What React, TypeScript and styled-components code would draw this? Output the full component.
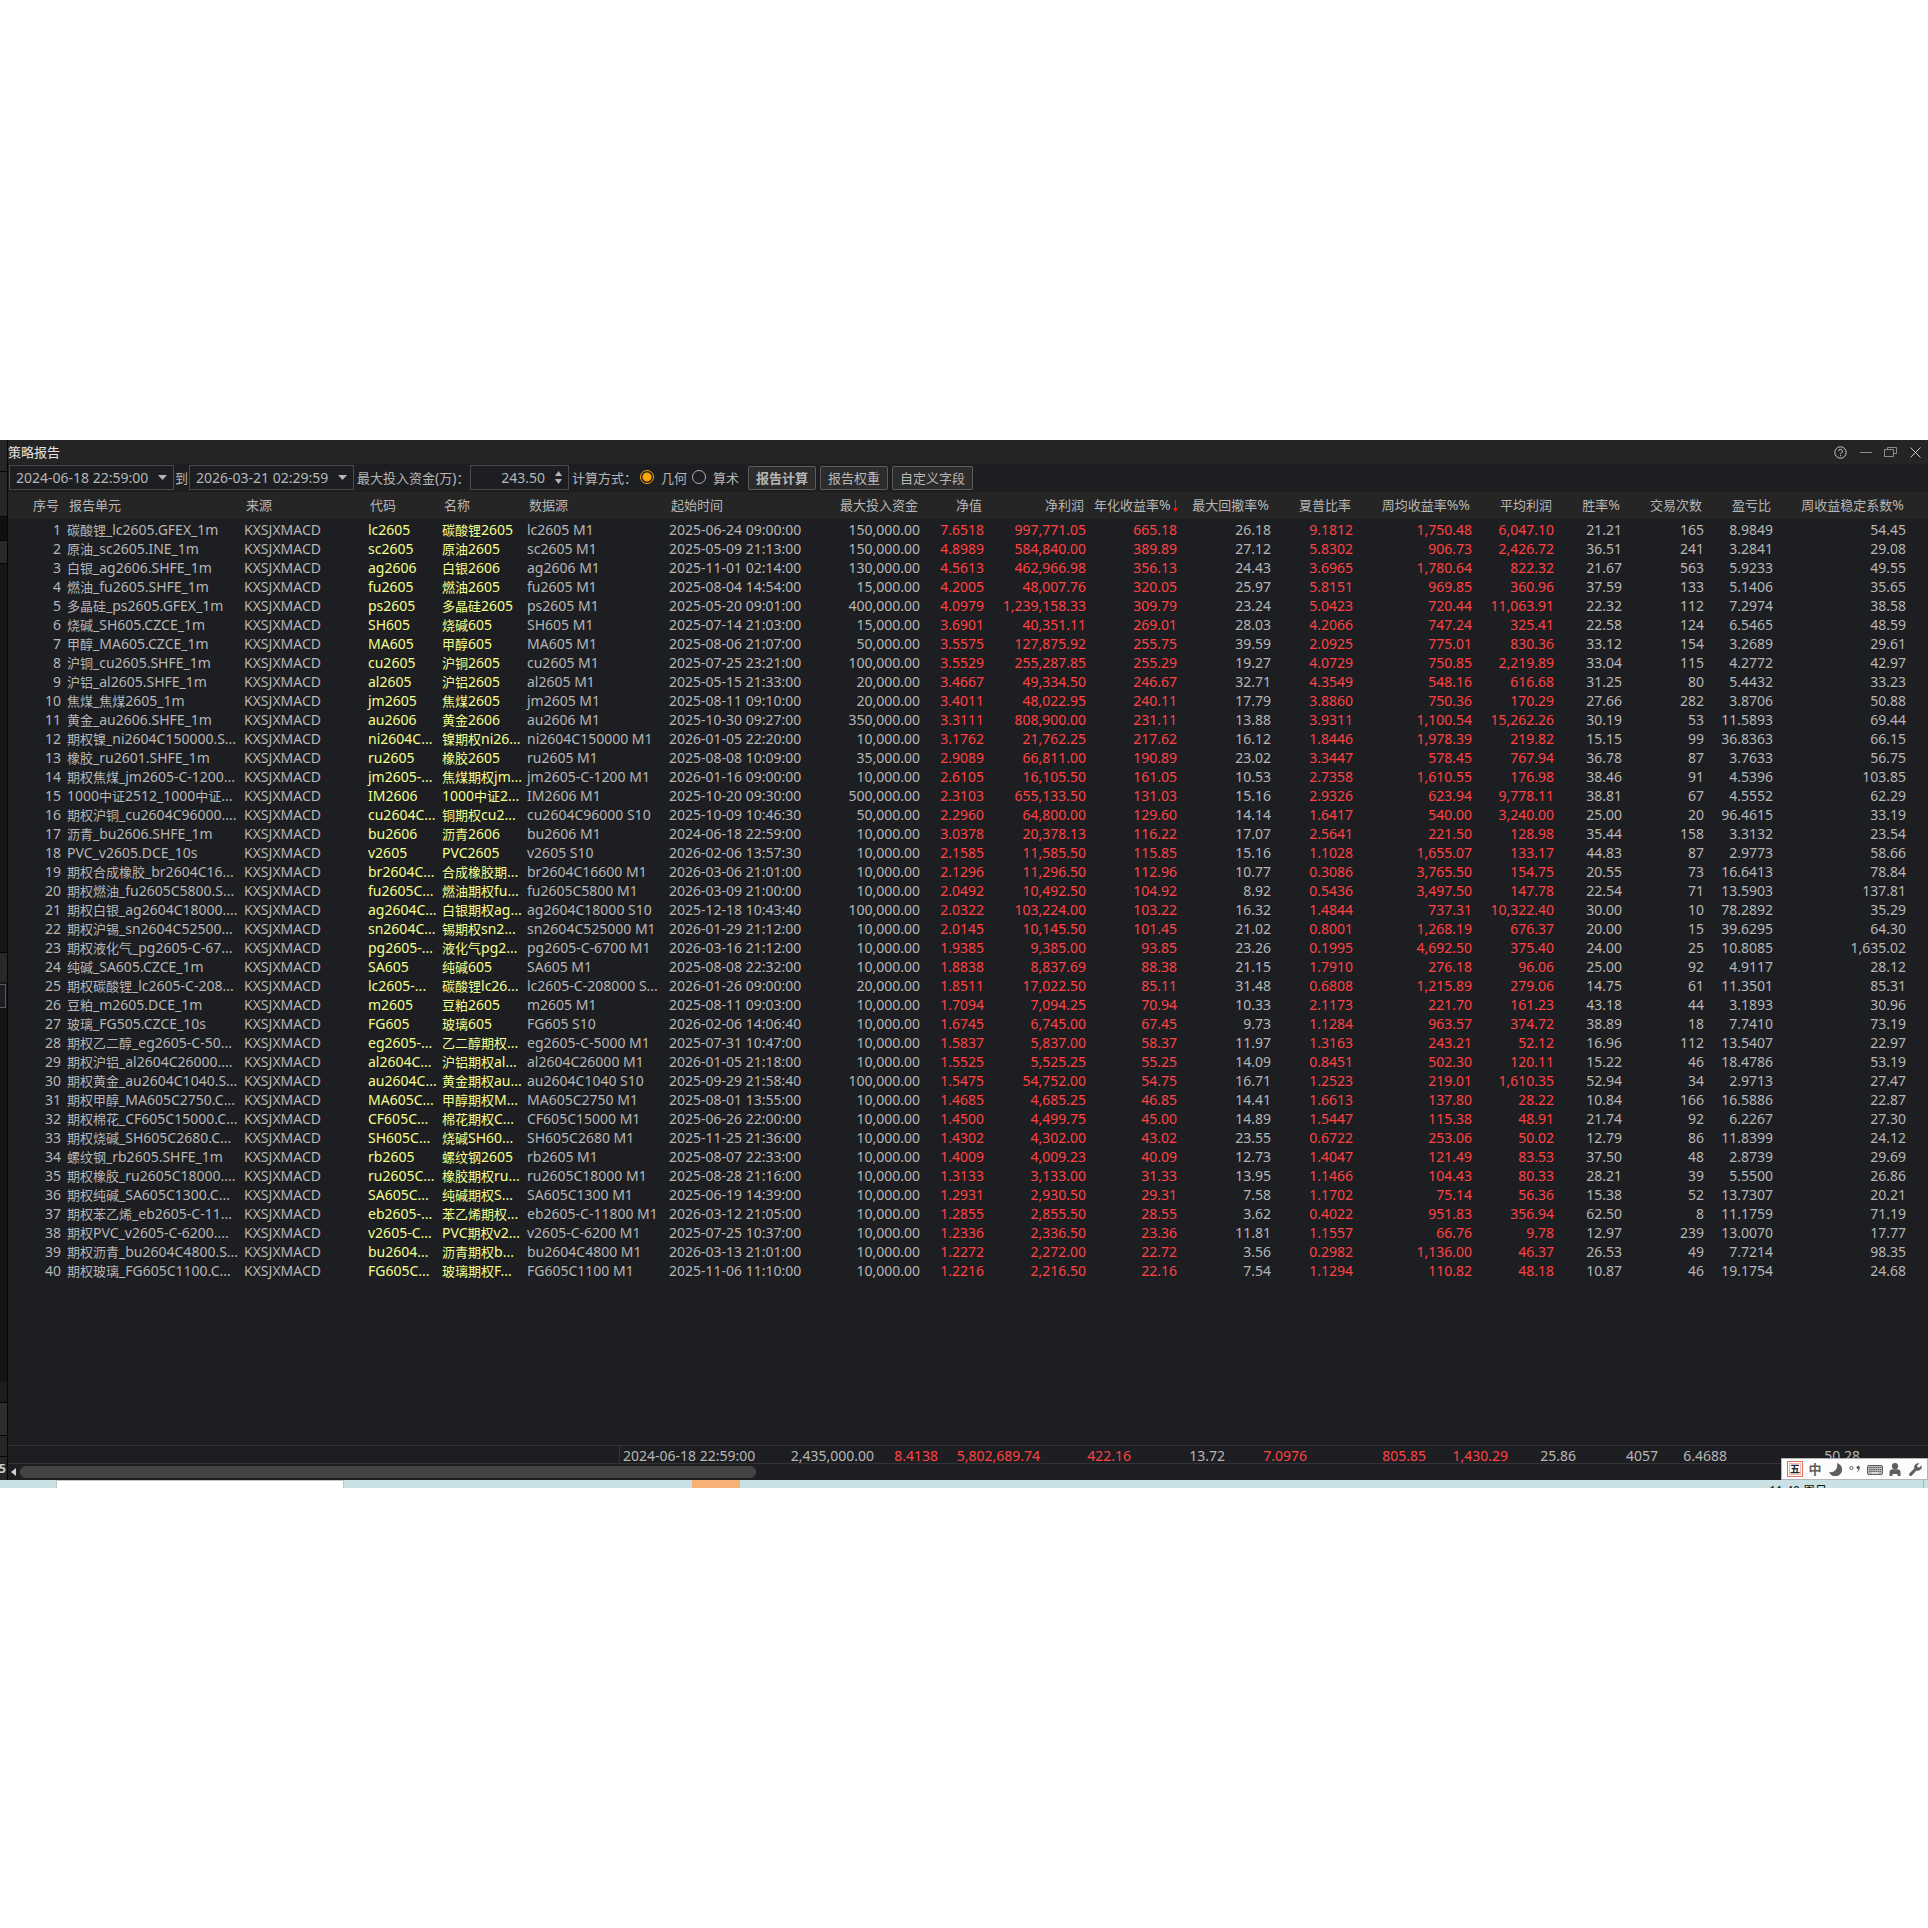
import React, { useState } from "react";
import styled, { createGlobalStyle, css } from "styled-components";

const GlobalStyle = createGlobalStyle`
  * { box-sizing: border-box; }
  body {
    margin: 0;
    background: #fff;
    font-family: "Noto Sans", "Noto Sans CJK SC", sans-serif;
    font-size: 14px;
    color: #b6b6b6;
  }
  button, input, select { font: inherit; color: inherit; margin: 0; }
`;

/* ---------- data ---------- */

type Kind = "text" | "name" | "num" | "gain";

interface Column {
  title: string;
  width: number;
  kind: Kind;
  sorted?: boolean;
}

const columns: Column[] = [
  { title: "序号", width: 56, kind: "num" },
  { title: "报告单元", width: 177, kind: "text" },
  { title: "来源", width: 124, kind: "text" },
  { title: "代码", width: 74, kind: "name" },
  { title: "名称", width: 85, kind: "name" },
  { title: "数据源", width: 142, kind: "text" },
  { title: "起始时间", width: 146, kind: "text" },
  { title: "最大投入资金", width: 111, kind: "num" },
  { title: "净值", width: 64, kind: "gain" },
  { title: "净利润", width: 102, kind: "gain" },
  { title: "年化收益率%", width: 91, kind: "gain", sorted: true },
  { title: "最大回撤率%", width: 94, kind: "num" },
  { title: "夏普比率", width: 82, kind: "gain" },
  { title: "周均收益率%%", width: 119, kind: "gain" },
  { title: "平均利润", width: 82, kind: "gain" },
  { title: "胜率%", width: 68, kind: "num" },
  { title: "交易次数", width: 82, kind: "num" },
  { title: "盈亏比", width: 69, kind: "num" },
  { title: "周收益稳定系数%", width: 133, kind: "num" },
];

const source = "KXSJXMACD";

const rows: string[][] = `
碳酸锂_lc2605.GFEX_1m|lc2605|碳酸锂2605|lc2605 M1|2025-06-24 09:00:00|150,000.00|7.6518|997,771.05|665.18|26.18|9.1812|1,750.48|6,047.10|21.21|165|8.9849|54.45
原油_sc2605.INE_1m|sc2605|原油2605|sc2605 M1|2025-05-09 21:13:00|150,000.00|4.8989|584,840.00|389.89|27.12|5.8302|906.73|2,426.72|36.51|241|3.2841|29.08
白银_ag2606.SHFE_1m|ag2606|白银2606|ag2606 M1|2025-11-01 02:14:00|130,000.00|4.5613|462,966.98|356.13|24.43|3.6965|1,780.64|822.32|21.67|563|5.9233|49.55
燃油_fu2605.SHFE_1m|fu2605|燃油2605|fu2605 M1|2025-08-04 14:54:00|15,000.00|4.2005|48,007.76|320.05|25.97|5.8151|969.85|360.96|37.59|133|5.1406|35.65
多晶硅_ps2605.GFEX_1m|ps2605|多晶硅2605|ps2605 M1|2025-05-20 09:01:00|400,000.00|4.0979|1,239,158.33|309.79|23.24|5.0423|720.44|11,063.91|22.32|112|7.2974|38.58
烧碱_SH605.CZCE_1m|SH605|烧碱605|SH605 M1|2025-07-14 21:03:00|15,000.00|3.6901|40,351.11|269.01|28.03|4.2066|747.24|325.41|22.58|124|6.5465|48.59
甲醇_MA605.CZCE_1m|MA605|甲醇605|MA605 M1|2025-08-06 21:07:00|50,000.00|3.5575|127,875.92|255.75|39.59|2.0925|775.01|830.36|33.12|154|3.2689|29.61
沪铜_cu2605.SHFE_1m|cu2605|沪铜2605|cu2605 M1|2025-07-25 23:21:00|100,000.00|3.5529|255,287.85|255.29|19.27|4.0729|750.85|2,219.89|33.04|115|4.2772|42.97
沪铝_al2605.SHFE_1m|al2605|沪铝2605|al2605 M1|2025-05-15 21:33:00|20,000.00|3.4667|49,334.50|246.67|32.71|4.3549|548.16|616.68|31.25|80|5.4432|33.23
焦煤_焦煤2605_1m|jm2605|焦煤2605|jm2605 M1|2025-08-11 09:10:00|20,000.00|3.4011|48,022.95|240.11|17.79|3.8860|750.36|170.29|27.66|282|3.8706|50.88
黄金_au2606.SHFE_1m|au2606|黄金2606|au2606 M1|2025-10-30 09:27:00|350,000.00|3.3111|808,900.00|231.11|13.88|3.9311|1,100.54|15,262.26|30.19|53|11.5893|69.44
期权镍_ni2604C150000.S...|ni2604C...|镍期权ni26...|ni2604C150000 M1|2026-01-05 22:20:00|10,000.00|3.1762|21,762.25|217.62|16.12|1.8446|1,978.39|219.82|15.15|99|36.8363|66.15
橡胶_ru2601.SHFE_1m|ru2605|橡胶2605|ru2605 M1|2025-08-08 10:09:00|35,000.00|2.9089|66,811.00|190.89|23.02|3.3447|578.45|767.94|36.78|87|3.7633|56.75
期权焦煤_jm2605-C-1200...|jm2605-...|焦煤期权jm...|jm2605-C-1200 M1|2026-01-16 09:00:00|10,000.00|2.6105|16,105.50|161.05|10.53|2.7358|1,610.55|176.98|38.46|91|4.5396|103.85
1000中证2512_1000中证...|IM2606|1000中证2...|IM2606 M1|2025-10-20 09:30:00|500,000.00|2.3103|655,133.50|131.03|15.16|2.9326|623.94|9,778.11|38.81|67|4.5552|62.29
期权沪铜_cu2604C96000....|cu2604C...|铜期权cu2...|cu2604C96000 S10|2025-10-09 10:46:30|50,000.00|2.2960|64,800.00|129.60|14.14|1.6417|540.00|3,240.00|25.00|20|96.4615|33.19
沥青_bu2606.SHFE_1m|bu2606|沥青2606|bu2606 M1|2024-06-18 22:59:00|10,000.00|3.0378|20,378.13|116.22|17.07|2.5641|221.50|128.98|35.44|158|3.3132|23.54
PVC_v2605.DCE_10s|v2605|PVC2605|v2605 S10|2026-02-06 13:57:30|10,000.00|2.1585|11,585.50|115.85|15.16|1.1028|1,655.07|133.17|44.83|87|2.9773|58.66
期权合成橡胶_br2604C16...|br2604C...|合成橡胶期...|br2604C16600 M1|2026-03-06 21:01:00|10,000.00|2.1296|11,296.50|112.96|10.77|0.3086|3,765.50|154.75|20.55|73|16.6413|78.84
期权燃油_fu2605C5800.S...|fu2605C...|燃油期权fu...|fu2605C5800 M1|2026-03-09 21:00:00|10,000.00|2.0492|10,492.50|104.92|8.92|0.5436|3,497.50|147.78|22.54|71|13.5903|137.81
期权白银_ag2604C18000....|ag2604C...|白银期权ag...|ag2604C18000 S10|2025-12-18 10:43:40|100,000.00|2.0322|103,224.00|103.22|16.32|1.4844|737.31|10,322.40|30.00|10|78.2892|35.29
期权沪锡_sn2604C52500...|sn2604C...|锡期权sn2...|sn2604C525000 M1|2026-01-29 21:12:00|10,000.00|2.0145|10,145.50|101.45|21.02|0.8001|1,268.19|676.37|20.00|15|39.6295|64.30
期权液化气_pg2605-C-67...|pg2605-...|液化气pg2...|pg2605-C-6700 M1|2026-03-16 21:12:00|10,000.00|1.9385|9,385.00|93.85|23.26|0.1995|4,692.50|375.40|24.00|25|10.8085|1,635.02
纯碱_SA605.CZCE_1m|SA605|纯碱605|SA605 M1|2025-08-08 22:32:00|10,000.00|1.8838|8,837.69|88.38|21.15|1.7910|276.18|96.06|25.00|92|4.9117|28.12
期权碳酸锂_lc2605-C-208...|lc2605-...|碳酸锂lc26...|lc2605-C-208000 S...|2026-01-26 09:00:00|20,000.00|1.8511|17,022.50|85.11|31.48|0.6808|1,215.89|279.06|14.75|61|11.3501|85.31
豆粕_m2605.DCE_1m|m2605|豆粕2605|m2605 M1|2025-08-11 09:03:00|10,000.00|1.7094|7,094.25|70.94|10.33|2.1173|221.70|161.23|43.18|44|3.1893|30.96
玻璃_FG505.CZCE_10s|FG605|玻璃605|FG605 S10|2026-02-06 14:06:40|10,000.00|1.6745|6,745.00|67.45|9.73|1.1284|963.57|374.72|38.89|18|7.7410|73.19
期权乙二醇_eg2605-C-50...|eg2605-...|乙二醇期权...|eg2605-C-5000 M1|2025-07-31 10:47:00|10,000.00|1.5837|5,837.00|58.37|11.97|1.3163|243.21|52.12|16.96|112|13.5407|22.97
期权沪铝_al2604C26000....|al2604C...|沪铝期权al...|al2604C26000 M1|2026-01-05 21:18:00|10,000.00|1.5525|5,525.25|55.25|14.09|0.8451|502.30|120.11|15.22|46|18.4786|53.19
期权黄金_au2604C1040.S...|au2604C...|黄金期权au...|au2604C1040 S10|2025-09-29 21:58:40|100,000.00|1.5475|54,752.00|54.75|16.71|1.2523|219.01|1,610.35|52.94|34|2.9713|27.47
期权甲醇_MA605C2750.C...|MA605C...|甲醇期权M...|MA605C2750 M1|2025-08-01 13:55:00|10,000.00|1.4685|4,685.25|46.85|14.41|1.6613|137.80|28.22|10.84|166|16.5886|22.87
期权棉花_CF605C15000.C...|CF605C...|棉花期权C...|CF605C15000 M1|2025-06-26 22:00:00|10,000.00|1.4500|4,499.75|45.00|14.89|1.5447|115.38|48.91|21.74|92|6.2267|27.30
期权烧碱_SH605C2680.C...|SH605C...|烧碱SH60...|SH605C2680 M1|2025-11-25 21:36:00|10,000.00|1.4302|4,302.00|43.02|23.55|0.6722|253.06|50.02|12.79|86|11.8399|24.12
螺纹钢_rb2605.SHFE_1m|rb2605|螺纹钢2605|rb2605 M1|2025-08-07 22:33:00|10,000.00|1.4009|4,009.23|40.09|12.73|1.4047|121.49|83.53|37.50|48|2.8739|29.69
期权橡胶_ru2605C18000....|ru2605C...|橡胶期权ru...|ru2605C18000 M1|2025-08-28 21:16:00|10,000.00|1.3133|3,133.00|31.33|13.95|1.1466|104.43|80.33|28.21|39|5.5500|26.86
期权纯碱_SA605C1300.C...|SA605C...|纯碱期权S...|SA605C1300 M1|2025-06-19 14:39:00|10,000.00|1.2931|2,930.50|29.31|7.58|1.1702|75.14|56.36|15.38|52|13.7307|20.21
期权苯乙烯_eb2605-C-11...|eb2605-...|苯乙烯期权...|eb2605-C-11800 M1|2026-03-12 21:05:00|10,000.00|1.2855|2,855.50|28.55|3.62|0.4022|951.83|356.94|62.50|8|11.1759|71.19
期权PVC_v2605-C-6200....|v2605-C...|PVC期权v2...|v2605-C-6200 M1|2025-07-25 10:37:00|10,000.00|1.2336|2,336.50|23.36|11.81|1.1557|66.76|9.78|12.97|239|13.0070|17.77
期权沥青_bu2604C4800.S...|bu2604...|沥青期权b...|bu2604C4800 M1|2026-03-13 21:01:00|10,000.00|1.2272|2,272.00|22.72|3.56|0.2982|1,136.00|46.37|26.53|49|7.7214|98.35
期权玻璃_FG605C1100.C...|FG605C...|玻璃期权F...|FG605C1100 M1|2025-11-06 11:10:00|10,000.00|1.2216|2,216.50|22.16|7.54|1.1294|110.82|48.18|10.87|46|19.1754|24.68
`
  .trim()
  .split("\n")
  .map((line, i) => {
    const [unit, ...rest] = line.split("|");
    return [String(i + 1), unit, source, ...rest];
  });

const totals = [
  "2024-06-18 22:59:00", "2,435,000.00", "8.4138", "5,802,689.74", "422.16", "13.72",
  "7.0976", "805.85", "1,430.29", "25.86", "4057", "6.4688", "50.28",
];

/* ---------- mixed script text ---------- */

const Han = styled.span`
  font-family: "Noto Sans CJK SC", sans-serif;
  font-size: 13px;
  line-height: 1;
`;

function Mixed({ text }: { text: string }) {
  const parts = text.split(/([\u3400-\u9fff\uff1a]+)/).filter(Boolean);
  return (
    <>
      {parts.map((part, i) =>
        /[\u3400-\u9fff\uff1a]/.test(part) ? <Han key={i}>{part}</Han> : part
      )}
    </>
  );
}

/* ---------- layout ---------- */

const Page = styled.div`
  padding-top: 440px;
`;

const Desktop = styled.div`
  position: relative;
  display: flex;
  background: #161616;
`;

const Strip = styled.div`
  flex: 0 0 8px;
  display: flex;
  flex-direction: column;
  border-right: 1px solid #050505;
  overflow: hidden;
`;

const Segment = styled.div<{ $h?: number; $bg: string; $line?: boolean }>`
  flex: ${(p) => (p.$h ? `0 0 ${p.$h}px` : "1 1 0")};
  background: ${(p) => p.$bg};
  ${(p) => p.$line && css`border-bottom: 1px solid #050505;`}
`;

const StripBox = styled.div`
  flex: 0 0 24px;
  width: 6px;
  border: 1px solid #5a5a5a;
  border-left: 0;
  background: #1d1e22;
`;

const StripDigit = styled.div`
  flex: 0 0 23px;
  display: flex;
  justify-content: flex-end;
  padding-right: 1px;
  background: #262626;
  font-weight: 700;
  font-size: 13px;
  line-height: 22px;
  color: #c8c8c8;
`;

const Panel = styled.main`
  flex: 1;
  min-width: 0;
  background: #1d1e22;
`;

const TitleBar = styled.header`
  display: flex;
  align-items: center;
  justify-content: space-between;
  height: 24px;
  background: #242424;
`;

const Title = styled.h1`
  margin: 0;
  font-size: 13px;
  font-weight: 400;
  line-height: 24px;
  color: #e4e4e4;
`;

const WindowButtons = styled.div`
  display: flex;
`;

const WindowButton = styled.button`
  display: grid;
  place-items: center;
  width: 25px;
  height: 24px;
  padding: 0;
  border: 0;
  background: none;
  color: #a8a8a8;
`;

const Toolbar = styled.form`
  display: flex;
  align-items: center;
  height: 28px;
  padding: 0 1px 2px;
`;

const Picker = styled.span`
  position: relative;
  flex: 0 0 165px;
  height: 25px;
  svg {
    position: absolute;
    right: 7px;
    top: 10px;
    pointer-events: none;
  }
`;

const PickerSelect = styled.select`
  appearance: none;
  width: 100%;
  height: 25px;
  padding: 0 20px 0 6px;
  border: 1px solid #4a4a4d;
  border-radius: 0;
  background: #1d1e22;
`;

const Caption = styled.label<{ $w: number }>`
  flex: 0 0 ${(p) => p.$w}px;
  padding-left: 3px;
  line-height: 25px;
  white-space: nowrap;
`;

const To = styled.span`
  flex: 0 0 15px;
  text-align: center;
  line-height: 25px;
`;

const Spin = styled.span`
  display: flex;
  flex: 0 0 99px;
  min-width: 0;
  height: 25px;
  border: 1px solid #4a4a4d;
`;

const SpinInput = styled.input`
  flex: 1 1 0;
  width: 0;
  min-width: 0;
  padding: 0 10px 0 0;
  border: 0;
  background: none;
  text-align: right;
`;

const SpinArrows = styled.span`
  display: flex;
  flex-direction: column;
  justify-content: center;
  gap: 3px;
  width: 13px;
`;

const SpinButton = styled.button`
  display: block;
  height: 5px;
  padding: 0;
  border: 0;
  background: none;
  line-height: 0;
  text-align: left;
`;

const Choice = styled.label`
  display: flex;
  align-items: center;
  gap: 7px;
  margin-right: 5px;
  line-height: 25px;
`;

const Radio = styled.input`
  appearance: none;
  width: 14px;
  height: 14px;
  border: 1px solid #b0b0b0;
  border-radius: 50%;
  &:checked {
    border-color: #ffa600;
    background: radial-gradient(circle, #ffa600 0 4px, transparent 5px);
  }
`;

const Action = styled.button<{ $strong?: boolean }>`
  height: 24px;
  margin: 1px 0 0 4px;
  padding: 0 7px;
  border: 1px solid #5c5c5c;
  border-radius: 2px;
  background: #2c2c2c;
  font-weight: ${(p) => (p.$strong ? 700 : 400)};
  line-height: 22px;
`;

/* ---------- grid ---------- */

const Viewport = styled.div`
  min-height: 953px;
`;

const Grid = styled.table`
  width: 100%;
  table-layout: fixed;
  border-collapse: separate;
  border-spacing: 0;
`;

const isRight = (k: Kind) => k === "num" || k === "gain";

const Th = styled.th<{ $kind: Kind; $sorted?: boolean }>`
  height: 27px;
  padding: 0 ${(p) => (p.$sorted ? 3 : 5)}px 0 5px;
  background: #252525;
  font-weight: 400;
  line-height: 25px;
  vertical-align: top;
  white-space: nowrap;
  text-align: ${(p) => (isRight(p.$kind) ? "right" : "left")};
`;

const Gap = styled.td`
  height: 1px;
  padding: 0;
`;

const Td = styled.td<{ $kind: Kind }>`
  height: 19px;
  padding: 0 3px;
  overflow: hidden;
  line-height: 19px;
  white-space: nowrap;
  text-align: ${(p) => (isRight(p.$kind) ? "right" : "left")};
  color: ${(p) => (p.$kind === "name" ? "#f4ff8c" : p.$kind === "gain" ? "#ff4242" : "#b6b6b6")};
`;

const Totals = styled.div`
  height: 19px;
  border: solid #343438;
  border-width: 1px 0;
  overflow: hidden;
`;

const Lead = styled.td`
  padding: 0;
  border-right: 1px solid #343438;
`;

const ScrollBar = styled.div`
  display: flex;
  align-items: center;
  gap: 4px;
  height: 16px;
  padding-left: 3px;
`;

const ScrollStep = styled.button`
  width: 5px;
  height: 8px;
  padding: 0;
  border: 0;
  background: none;
  line-height: 0;
`;

const Track = styled.div`
  flex: 1;
`;

const Thumb = styled.div`
  width: 38.6%;
  height: 12px;
  border-radius: 6px;
  background: #434343;
`;

/* ---------- desktop edge ---------- */

const ImeBar = styled.div`
  position: absolute;
  right: 0;
  bottom: 0;
  display: flex;
  align-items: center;
  height: 22px;
  padding: 0 2px 0 3px;
  border: 1px solid #b4b4b8;
  background: #fcfcfc;
`;

const ImeButton = styled.button`
  display: grid;
  place-items: center;
  width: 20px;
  height: 20px;
  padding: 0;
  border: 0;
  background: none;
  color: #5e5e5e;
  font-family: "Noto Sans CJK SC", sans-serif;
  font-size: 13px;
  font-weight: 700;
  line-height: 20px;
`;

const Seal = styled.span`
  display: grid;
  place-items: center;
  width: 16px;
  height: 16px;
  border: 1px solid #e0705f;
  outline: 1px solid #f3b9b0;
  outline-offset: -3px;
  color: #222;
  font-size: 10px;
  line-height: 14px;
`;

const TaskBar = styled.footer`
  display: flex;
  height: 8px;
  overflow: hidden;
  padding-left: 56px;
  background: #c9e0e4;
`;

const TaskTab = styled.div`
  flex: 0 0 288px;
  margin-right: 348px;
  border: solid #c4c4c4;
  border-width: 1px 1px 0;
  background: #fff;
`;

const TaskAlert = styled.div`
  flex: 0 0 48px;
  background: #f7b076;
`;

const Clock = styled.time`
  margin: 0 4px 0 auto;
  padding: 2px 96px 0 0;
  border-right: 1px solid #9fb8bc;
  color: #111;
  font-size: 12px;
  line-height: 17px;
`;

const DownTriangle = () => (
  <svg width="9" height="5" viewBox="0 0 9 5" aria-hidden="true">
    <path d="M0 0h9L4.5 5z" fill="#b6b6b6" />
  </svg>
);

const SortIcon = styled.svg`
  margin-left: 2px;
  vertical-align: -2px;
`;

const SortMark = () => (
  <SortIcon width="5" height="12" viewBox="0 0 5 12" aria-hidden="true">
    <path d="M2 0h1v8h2L2.5 12 0 8h2z" fill="#ff1010" />
  </SortIcon>
);

const cols = (list: Column[]) => list.map((c) => <col key={c.title} style={{ width: c.width }} />);

export default function App() {
  const [mode, setMode] = useState("geo");
  const [capital, setCapital] = useState("243.50");
  const totalColumns = columns.slice(6);

  return (
    <Page>
      <GlobalStyle />
      <Desktop>
        <Strip>
          <Segment $h={32} $bg="#262626" $line />
          <Segment $h={45} $bg="#262626" $line />
          <Segment $h={24} $bg="#101010" $line />
          <Segment $h={23} $bg="#292929" $line />
          <Segment $h={389} $bg="#161616" $line />
          <Segment $h={29} $bg="#282828" />
          <Segment $h={2} $bg="#161616" />
          <StripBox />
          <Segment $bg="#141414" />
          <Segment $h={22} $bg="#1c1c1c" $line />
          <Segment $h={33} $bg="#2e2e2e" $line />
          <Segment $h={21} $bg="#262626" $line />
          <StripDigit>5</StripDigit>
        </Strip>
        <Panel>
          <TitleBar>
            <Title>策略报告</Title>
            <WindowButtons>
              <WindowButton aria-label="帮助">
                <svg width="13" height="13" viewBox="0 0 13 13" fill="none" stroke="#c8c8c8">
                  <circle cx="6.5" cy="6.5" r="5.7" />
                  <path d="M4.6 5.2a1.9 1.9 0 1 1 2.8 1.7q-.9.4-.9 1.2M6.5 9v1.2" />
                </svg>
              </WindowButton>
              <WindowButton aria-label="最小化">
                <svg width="12" height="12" viewBox="0 0 12 12" stroke="#8c8c8c">
                  <path d="M0 6.5h12" />
                </svg>
              </WindowButton>
              <WindowButton aria-label="还原">
                <svg width="13" height="12" viewBox="0 0 13 12" fill="none" stroke="#8c8c8c">
                  <path d="M.5 3.5h9v7h-9zM3.5 3.500v-2h9v6h-3" />
                </svg>
              </WindowButton>
              <WindowButton aria-label="关闭">
                <svg width="11" height="11" viewBox="0 0 11 11" stroke="#c8c8c8">
                  <path d="M.5.5l10 10M10.5.5l-10 10" />
                </svg>
              </WindowButton>
            </WindowButtons>
          </TitleBar>

          <Toolbar onSubmit={(e) => e.preventDefault()}>
            <Picker>
              <PickerSelect aria-label="起始时间">
                <option>2024-06-18 22:59:00</option>
              </PickerSelect>
              <DownTriangle />
            </Picker>
            <To><Mixed text="到" /></To>
            <Picker>
              <PickerSelect aria-label="结束时间">
                <option>2026-03-21 02:29:59</option>
              </PickerSelect>
              <DownTriangle />
            </Picker>
            <Caption $w={116} htmlFor="capital"><Mixed text="最大投入资金(万)：" /></Caption>
            <Spin>
              <SpinInput id="capital" inputMode="decimal" value={capital} onChange={(e) => setCapital(e.target.value)} />
              <SpinArrows>
                <SpinButton type="button" aria-label="增加">
                  <svg width="7" height="5" viewBox="0 0 7 5"><path d="M0 5h7L3.5 0z" fill="#b6b6b6" /></svg>
                </SpinButton>
                <SpinButton type="button" aria-label="减少">
                  <svg width="7" height="5" viewBox="0 0 7 5"><path d="M0 0h7L3.5 5z" fill="#b6b6b6" /></svg>
                </SpinButton>
              </SpinArrows>
            </Spin>
            <Caption as="span" $w={71}><Mixed text="计算方式：" /></Caption>
            <Choice>
              <Radio type="radio" name="mode" checked={mode === "geo"} onChange={() => setMode("geo")} />
              <Mixed text="几何" />
            </Choice>
            <Choice>
              <Radio type="radio" name="mode" checked={mode === "ari"} onChange={() => setMode("ari")} />
              <Mixed text="算术" />
            </Choice>
            <Action $strong><Mixed text="报告计算" /></Action>
            <Action type="button"><Mixed text="报告权重" /></Action>
            <Action type="button"><Mixed text="自定义字段" /></Action>
          </Toolbar>

          <Viewport>
            <Grid>
              <colgroup>{cols(columns)}<col /></colgroup>
              <thead>
                <tr>
                  {columns.map((c) => (
                    <Th key={c.title} $kind={c.kind} $sorted={c.sorted}>
                      <Mixed text={c.title} />
                      {c.sorted && <SortMark />}
                    </Th>
                  ))}
                  <Th $kind="text" />
                </tr>
              </thead>
              <tbody>
                <tr><Gap colSpan={20} /></tr>
                {rows.map((row) => (
                  <tr key={row[0]}>
                    {row.map((value, i) => (
                      <Td key={i} $kind={columns[i].kind}><Mixed text={value} /></Td>
                    ))}
                  </tr>
                ))}
              </tbody>
            </Grid>
          </Viewport>

          <Totals>
            <Grid>
              <colgroup><col style={{ width: 612 }} />{cols(totalColumns)}<col /></colgroup>
              <tbody>
                <tr>
                  <Lead />
                  {totals.map((value, i) => (
                    <Td key={i} $kind={totalColumns[i].kind}>{value}</Td>
                  ))}
                  <Td $kind="num" />
                </tr>
              </tbody>
            </Grid>
          </Totals>

          <ScrollBar>
            <ScrollStep aria-label="向左滚动">
              <svg width="5" height="8" viewBox="0 0 5 8"><path d="M5 0v8L0 4z" fill="#d0d0d0" /></svg>
            </ScrollStep>
            <Track><Thumb /></Track>
          </ScrollBar>
        </Panel>

        <ImeBar>
          <ImeButton aria-label="五笔"><Seal>五</Seal></ImeButton>
          <ImeButton>中</ImeButton>
          <ImeButton aria-label="半角">
            <svg width="13" height="13" viewBox="0 0 13 13"><path d="M8 0a6.8 6.8 0 1 1-8 9q4 1 6.500-2T8 0z" fill="#5e5e5e" /></svg>
          </ImeButton>
          <ImeButton aria-label="标点">
            <svg width="12" height="10" viewBox="0 0 12 10">
              <circle cx="2.5" cy="4" r="1.6" fill="none" stroke="#5e5e5e" />
              <path d="M7.5 3.5a1.7 1.7 0 1 1 3.4 0q0 3-2.4 4.5l-.4-.5q1.2-1 1.2-2.3-1.8 0-1.8-1.7z" fill="#5e5e5e" />
            </svg>
          </ImeButton>
          <ImeButton aria-label="软键盘">
            <svg width="16" height="11" viewBox="0 0 16 11" fill="none" stroke="#5e5e5e">
              <rect x=".5" y="1.5" width="15" height="9" rx="1.5" fill="#b8b8b8" />
              <path d="M2 3.5h12M2 5.5h12M2 7.5h12" strokeDasharray="1.5 .7" />
              <path d="M4.5 9h7" stroke="#fcfcfc" />
            </svg>
          </ImeButton>
          <ImeButton aria-label="用户">
            <svg width="12" height="13" viewBox="0 0 12 13" fill="#5e5e5e">
              <circle cx="6" cy="3.2" r="3.1" />
              <path d="M.5 13V9q0-2.8 3.500-2.800h4q3.500 0 3.500 2.800v4H8.500v-2h-5v2z" />
            </svg>
          </ImeButton>
          <ImeButton aria-label="设置">
            <svg width="13" height="13" viewBox="0 0 13 13" fill="#5e5e5e">
              <path d="M12.5 2.5L10.3 4.6 8.5 4.2 8.1 2.5 10.3.4A4 4 0 0 0 5.4 5.5L.6 10.2a1.5 1.5 0 0 0 2.2 2.2L7.5 7.6a4 4 0 0 0 5-5.1z" />
            </svg>
          </ImeButton>
        </ImeBar>
      </Desktop>
      <TaskBar>
        <TaskTab />
        <TaskAlert />
        <Clock>11:49 周日</Clock>
      </TaskBar>
    </Page>
  );
}
